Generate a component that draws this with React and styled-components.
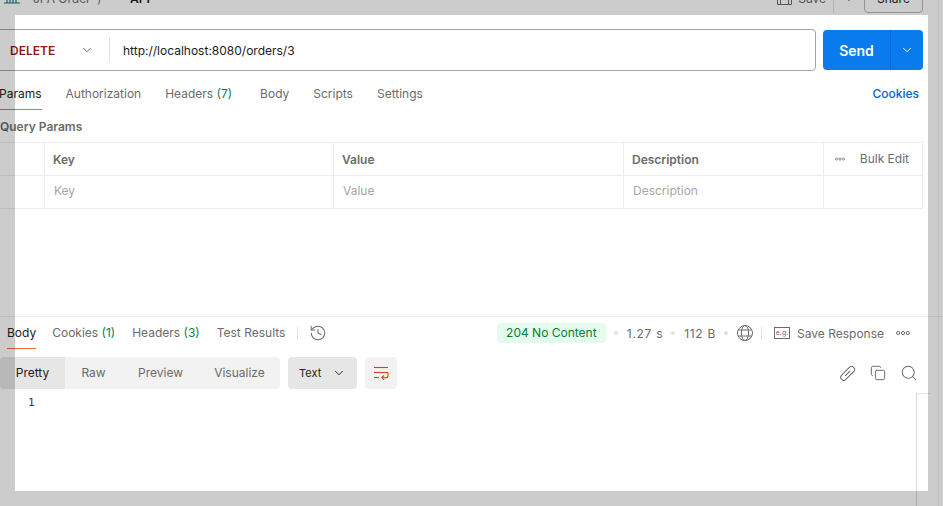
import React from 'react';
import styled, { createGlobalStyle } from 'styled-components';
import { ChevronDown, Copy, Search, History } from 'lucide-react';

const GlobalStyle = createGlobalStyle`
  html, body {
    margin: 0;
    padding: 0;
    background: #fff;
    overflow: hidden;
  }
  body {
    font-family: Inter, "Liberation Sans", sans-serif;
    font-size: 12px;
    color: #6b6b6b;
  }
`;

const Page = styled.div`
  position: relative;
  width: 943px;
  height: 506px;
  overflow: hidden;
  background: #fff;
`;

// dims everything around the captured region
const SnipFrame = styled.div`
  position: absolute;
  top: 15px;
  left: 15px;
  width: 913px;
  height: 476px;
  box-shadow: 0 0 0 1200px rgba(0, 0, 0, 0.2);
  pointer-events: none;
`;

const WindowEdge = styled.div`
  position: absolute;
  top: 0;
  left: 938px;
  width: 1px;
  height: 506px;
  background: rgba(0, 0, 0, 0.05);
`;

const Header = styled.div`
  height: 15px;
  display: flex;
  align-items: flex-end;
  padding: 0 20px 0 3px;
`;

const CrumbIcon = styled.svg`
  width: 18px;
  height: 18px;
  color: #0d7d8c;
  margin: 0 12px 10px 0;
`;

const Crumbs = styled.div`
  display: flex;
  align-items: flex-end;
  gap: 7px;
  line-height: 16px;
  margin-bottom: 8px;
`;

const CrumbStrong = styled.span`
  color: #212121;
  font-weight: 600;
  margin-left: 21px;
`;

const HeaderActions = styled.div`
  margin-left: auto;
  display: flex;
  align-items: flex-end;
`;

const SaveLabel = styled.span`
  display: flex;
  align-items: flex-end;
  gap: 6px;
  line-height: 16px;
  padding-right: 7px;
  margin-bottom: 8px;
`;

const SaveIconBox = styled.svg`
  width: 15px;
  height: 15px;
  margin-bottom: 2px;
`;

const HeaderRule = styled.div`
  width: 1px;
  height: 20px;
  background: #e0e0e0;
  margin-bottom: 2px;
`;

const SaveArrow = styled.div`
  width: 31px;
  display: flex;
  justify-content: center;
  margin: 0 0 9px -1px;
`;

const ShareButton = styled.div`
  width: 57px;
  height: 23px;
  padding-bottom: 5px;
  border: 1px solid #b8b8b8;
  border-radius: 4px;
  margin-bottom: 2px;
  color: #212121;
  display: flex;
  align-items: flex-end;
  justify-content: center;
  line-height: 16px;
`;

const RequestRow = styled.div`
  display: flex;
  margin: 14px 20px 0 -4px;
  gap: 7px;
`;

const UrlBox = styled.div`
  flex: 1;
  height: 40px;
  border: 1px solid #a6a6a6;
  border-radius: 4px;
  display: flex;
  align-items: center;
`;

const Method = styled.div`
  width: 113px;
  height: 26px;
  box-sizing: border-box;
  padding: 0 15px 0 13px;
  border-right: 1px solid #e0e0e0;
  display: flex;
  align-items: center;
  justify-content: space-between;
  color: #8e1a10;
  font-weight: 600;
`;

const UrlText = styled.div`
  padding-left: 13px;
  color: #212121;
`;

const SendGroup = styled.div`
  width: 100px;
  height: 40px;
  margin-top: 1px;
  display: flex;
  border-radius: 4px;
  background: #097bed;
  color: #fff;
`;

const SendLabel = styled.div`
  width: 67px;
  display: flex;
  align-items: center;
  justify-content: center;
  font-size: 14px;
  font-weight: 600;
  border-right: 1px solid #0768c8;
`;

const SendArrow = styled.div`
  flex: 1;
  display: flex;
  align-items: center;
  justify-content: center;
`;

const RequestTabs = styled.div`
  display: flex;
  height: 32px;
  margin: 7px 24px 0 -1px;
  align-items: flex-start;
`;

const Tab = styled.div`
  height: 32px;
  line-height: 32px;
  box-sizing: border-box;
  margin-right: ${p => p.$gap || 24}px;
  color: ${p => (p.$active ? '#212121' : '#6b6b6b')};
  border-bottom: 1px solid ${p => (p.$active ? '#f26b3a' : 'transparent')};
`;

const Count = styled.span`
  color: #0a7d55;
`;

const CookiesLink = styled.div`
  margin-left: auto;
  line-height: 32px;
  color: #0265d2;
  font-weight: 500;
`;

const SectionTitle = styled.div`
  height: 32px;
  line-height: 33px;
  font-weight: 600;
`;

const ParamsTable = styled.div`
  display: grid;
  grid-template-columns: 65px 289px 290px 200px 99px;
  width: 943px;
  margin-left: -20px;
  border-top: 1px solid #ededed;
`;

const Cell = styled.div`
  height: 33px;
  line-height: ${p => (p.$head ? 34 : 30)}px;
  padding-left: ${p => (p.$head ? 8 : 9)}px;
  box-sizing: border-box;
  border-right: 1px solid #ededed;
  border-bottom: 1px solid #ededed;
  font-weight: ${p => (p.$head ? 600 : 400)};
  color: ${p => (p.$head ? '#6b6b6b' : '#a6a6a6')};
`;

const BulkCell = styled(Cell)`
  display: flex;
  align-items: center;
  justify-content: space-between;
  padding: 0 13px 0 11px;
  line-height: 32px;
  font-weight: 400;
`;

const ResponsePane = styled.div`
  margin-top: 107px;
  border-top: 1px solid #ededed;
`;

const ResponseBar = styled.div`
  display: flex;
  align-items: flex-start;
  height: 32px;
  padding: 0 33px 0 7px;
`;

const RespTab = styled(Tab)`
  margin-right: ${p => p.$gap || 16}px;
`;

const BarRule = styled.div`
  width: 1px;
  height: 12px;
  margin: 10px 11px 0 -4px;
  background: #e0e0e0;
`;

const BarIcon = styled.div`
  height: 32px;
  display: flex;
  align-items: center;
  color: #6b6b6b;
`;

const MetaGroup = styled.div`
  margin-left: auto;
  display: flex;
  align-items: center;
  height: 32px;
`;

const StatusBadge = styled.div`
  width: 109px;
  height: 20px;
  line-height: 20px;
  text-align: center;
  border-radius: 4px;
  background: #e5fbee;
  color: #007f31;
`;

const Dot = styled.span`
  width: 4px;
  height: 4px;
  border-radius: 50%;
  background: #e0e0e0;
  margin: 0 9px 0 8px;
`;

const MetaText = styled.span`
  color: #6b6b6b;
  letter-spacing: ${p => p.$spacing || 0}px;
  margin-left: ${p => p.$left || 0}px;
  margin-right: ${p => p.$right || 0}px;
`;

const MetaRule = styled.div`
  width: 1px;
  height: 12px;
  background: #e0e0e0;
  margin: 0 12px 0 8px;
`;

const Toolbar = styled.div`
  display: flex;
  align-items: center;
  height: 32px;
  margin-top: 8px;
  padding-right: 25px;
`;

const Segments = styled.div`
  display: flex;
  width: 280px;
  height: 32px;
  border-radius: 4px;
  background: #f2f2f2;
  overflow: hidden;
`;

const Segment = styled.div`
  width: ${p => p.$width}px;
  text-align: center;
  line-height: 32px;
  color: ${p => (p.$active ? '#212121' : '#6b6b6b')};
  background: ${p => (p.$active ? '#e6e6e6' : 'transparent')};
`;

const FormatSelect = styled.div`
  width: 69px;
  height: 32px;
  margin-left: 8px;
  box-sizing: border-box;
  padding: 0 11px 0 11px;
  border-radius: 4px;
  background: #e6e6e6;
  display: flex;
  align-items: center;
  justify-content: space-between;
  color: #212121;
  font-size: 11px;
`;

const WrapButton = styled.div`
  width: 32px;
  height: 32px;
  margin-left: 8px;
  border-radius: 4px;
  background: #f2f2f2;
  display: flex;
  align-items: center;
  justify-content: center;
  color: #d74314;
`;

const ToolIcons = styled.div`
  margin-left: auto;
  display: flex;
  align-items: center;
  gap: 14px;
  color: #6b6b6b;
`;

const Editor = styled.div`
  display: flex;
  height: 113px;
  margin-top: 4px;
  padding-right: 12px;
`;

const LineNumber = styled.div`
  padding: 2px 0 0 28px;
  font-family: "DejaVu Sans Mono", "Liberation Mono", monospace;
  font-size: 11px;
  line-height: 16px;
  color: #1f3b63;
`;

const ScrollRail = styled.div`
  margin-left: auto;
  width: 14px;
  border-left: 1px solid #d9d9d9;
  border-top: 1px solid #e6e6e6;
`;

const LinkIcon = () => (
  <svg width="16" height="16" viewBox="0 0 16 16" fill="none" stroke="currentColor" strokeWidth="1">
    <g transform="rotate(-45 8 8)">
      <rect x="-1" y="5" width="17" height="6" rx="3" />
      <path d="M4 8h7" />
    </g>
  </svg>
);

const WrapIcon = () => (
  <svg width="16" height="16" viewBox="0 0 16 16" fill="none" stroke="currentColor" strokeWidth="1.1">
    <path d="M1 2.5h14" />
    <path d="M1 7.5h14" />
    <path d="M1 12.5h5" />
    <path d="M15 7.8v3a2 2 0 0 1-2 2H9" />
    <path d="M11 10.5 8.8 12.6l2.2 2.2" />
  </svg>
);

const GlobeIcon = () => (
  <svg width="16" height="16" viewBox="0 0 16 16" fill="none" stroke="#6b6b6b" strokeWidth="1">
    <circle cx="8" cy="8" r="7.5" />
    <ellipse cx="8" cy="8" rx="3.6" ry="7.5" />
    <path d="M1.4 5h13.2M1.4 11h13.2" />
  </svg>
);

const DotsIcon = ({ size }) => (
  <svg width={size} height="6" viewBox="0 0 14 6" fill="none" stroke="#6b6b6b" strokeWidth="1">
    <circle cx="2.2" cy="3" r="1.6" />
    <circle cx="7" cy="3" r="1.6" />
    <circle cx="11.8" cy="3" r="1.6" />
  </svg>
);

const ExampleIcon = () => (
  <svg width="16" height="12" viewBox="0 0 16 12" fill="none">
    <rect x=".5" y=".5" width="15" height="11" stroke="#6b6b6b" />
    <text x="8" y="8" textAnchor="middle" fontSize="7" fill="#6b6b6b" fontFamily="Inter, sans-serif">e.g.</text>
  </svg>
);

const SaveIcon = () => (
  <SaveIconBox viewBox="0 0 15 15" fill="none" stroke="#6b6b6b">
    <path d="M.5.5h14v14H.5zM3.5 14.5V9.5h8v5" />
  </SaveIconBox>
);

const CollectionIcon = () => (
  <CrumbIcon viewBox="0 0 18 18" fill="none" stroke="currentColor" strokeWidth="1.2">
    <path d="M1 16h16M4 10v6M7 10v6M10 10v6M13 10v6" />
  </CrumbIcon>
);

const paramCells = ['Key', 'Value', 'Description'];

export default function App() {
  return (
    <Page>
      <GlobalStyle />
      <Header>
        <CollectionIcon />
        <Crumbs>
          <span>JPA Order</span>
          <span>/</span>
          <CrumbStrong>API</CrumbStrong>
        </Crumbs>
        <HeaderActions>
          <SaveLabel>
            <SaveIcon />
            Save
          </SaveLabel>
          <HeaderRule />
          <SaveArrow>
            <ChevronDown size={14} strokeWidth={1.7} />
          </SaveArrow>
          <ShareButton>Share</ShareButton>
        </HeaderActions>
      </Header>

      <RequestRow>
        <UrlBox>
          <Method>
            DELETE
            <ChevronDown size={14} strokeWidth={1.7} color="#6b6b6b" />
          </Method>
          <UrlText>http://localhost:8080/orders/3</UrlText>
        </UrlBox>
        <SendGroup>
          <SendLabel>Send</SendLabel>
          <SendArrow>
            <ChevronDown size={14} strokeWidth={1.7} />
          </SendArrow>
        </SendGroup>
      </RequestRow>

      <RequestTabs>
        <Tab $active>Params</Tab>
        <Tab>Authorization</Tab>
        <Tab $gap={28}>Headers <Count>(7)</Count></Tab>
        <Tab>Body</Tab>
        <Tab>Scripts</Tab>
        <Tab>Settings</Tab>
        <CookiesLink>Cookies</CookiesLink>
      </RequestTabs>

      <SectionTitle>Query Params</SectionTitle>

      <ParamsTable>
        <Cell $head />
        {paramCells.map(name => <Cell $head key={name}>{name}</Cell>)}
        <BulkCell $head>
          <DotsIcon size={10} />
          Bulk Edit
        </BulkCell>
        <Cell />
        {paramCells.map(name => <Cell key={name}>{name}</Cell>)}
        <Cell />
      </ParamsTable>

      <ResponsePane>
        <ResponseBar>
          <RespTab $active>Body</RespTab>
          <RespTab $gap={17}>Cookies <Count>(1)</Count></RespTab>
          <RespTab $gap={17}>Headers <Count>(3)</Count></RespTab>
          <RespTab>Test Results</RespTab>
          <BarRule />
          <BarIcon><History size={18} strokeWidth={1.35} /></BarIcon>
          <MetaGroup>
            <StatusBadge>204 No Content</StatusBadge>
            <Dot />
            <MetaText $spacing={0.7}>1.27 s</MetaText>
            <Dot />
            <MetaText $spacing={0.7}>112 B</MetaText>
            <Dot />
            <GlobeIcon />
            <MetaRule />
            <ExampleIcon />
            <MetaText $left={7} $right={12}>Save Response</MetaText>
            <DotsIcon size={14} />
          </MetaGroup>
        </ResponseBar>

        <Toolbar>
          <Segments>
            <Segment $active $width={65}>Pretty</Segment>
            <Segment $width={57}>Raw</Segment>
            <Segment $width={77}>Preview</Segment>
            <Segment $width={81}>Visualize</Segment>
          </Segments>
          <FormatSelect>
            Text
            <ChevronDown size={14} strokeWidth={1.7} />
          </FormatSelect>
          <WrapButton><WrapIcon /></WrapButton>
          <ToolIcons>
            <LinkIcon />
            <Copy size={16} strokeWidth={1.5} />
            <Search size={18} strokeWidth={1.35} />
          </ToolIcons>
        </Toolbar>

        <Editor>
          <LineNumber>1</LineNumber>
          <ScrollRail />
        </Editor>
      </ResponsePane>
      <WindowEdge />
      <SnipFrame />
    </Page>
  );
}
